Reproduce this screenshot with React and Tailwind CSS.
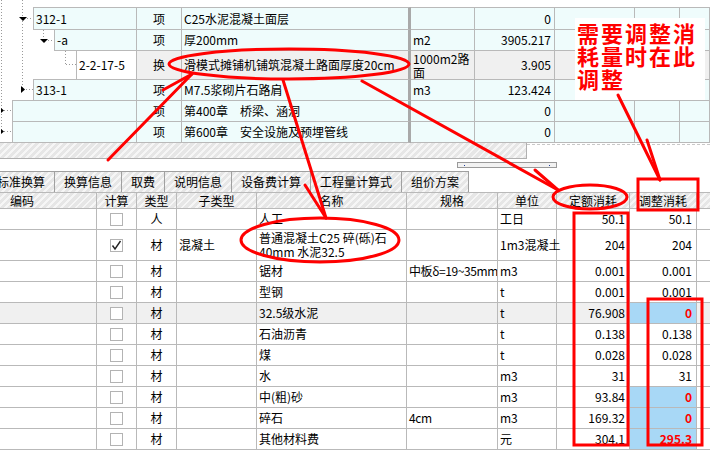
import React from 'react';

const GRID = 'border-[#b9b9b9]';
const HATCH = 'bg-[repeating-linear-gradient(135deg,#e6e6e6_0px,#e6e6e6_3px,#f6f6f6_3px,#f6f6f6_5px)]';
const CYAN = 'bg-[#effcfc]';

const topRows = [
  { h: 'h-[23px]', lineW: 'w-[33px]', segW: '', codeW: 'w-[104px]', code: '312-1', type: '项', name: 'C25水泥混凝土面层', unit: '', qty: '0' },
  { h: 'h-[21px]', lineW: 'w-[54px]', segW: '', codeW: 'w-[83px]', code: '-a', type: '项', name: '厚200mm', unit: 'm2', qty: '3905.217' },
  { h: 'h-[29px]', lineW: 'w-[33px]', segW: 'w-[43px]', codeW: 'w-[61px]', code: '2-2-17-5', type: '换', name: '滑模式摊铺机铺筑混凝土路面厚度20cm', unit: ['1000m2路', '面'], qty: '3.905', gray: true },
  { h: 'h-[21px]', lineW: 'w-[12px]', segW: 'w-[21px]', codeW: 'w-[104px]', code: '313-1', type: '项', name: 'M7.5浆砌片石路肩', unit: 'm3', qty: '123.424' },
  { h: 'h-[21px]', lineW: 'w-[12px]', segW: '', codeW: 'w-[125px]', code: '', type: '项', name: '第400章　桥梁、涵洞', unit: '', qty: '0' },
  { h: 'h-[21px]', lineW: '', segW: 'w-[12px]', codeW: 'w-[125px]', code: '', type: '项', name: '第600章　安全设施及预埋管线', unit: '', qty: '0' },
];

const tabs = ['标准换算', '换算信息', '取费', '说明信息', '设备费计算', '工程量计算式', '组价方案'];

const cols = [
  { label: '编码', w: 'w-[97px]', head: 'justify-start pl-[10px]' },
  { label: '计算', w: 'w-[40px]', head: 'justify-center' },
  { label: '类型', w: 'w-[40px]', head: 'justify-center' },
  { label: '子类型', w: 'w-[80px]', head: 'justify-center' },
  { label: '名称', w: 'w-[150px]', head: 'justify-center' },
  { label: '规格', w: 'w-[91px]', head: 'justify-center' },
  { label: '单位', w: 'w-[59px]', head: 'justify-center' },
  { label: '定额消耗', w: 'w-[73px]', head: 'justify-center' },
  { label: '调整消耗', w: 'w-[67px]', head: 'justify-center' },
];

const rows = [
  { calc: false, type: '人', sub: '', name: '人工', spec: '', unit: '工日', quota: '50.1', adj: '50.1' },
  { calc: true, type: '材', sub: '混凝土', name: ['普通混凝土C25 碎(砾)石', '40mm 水泥32.5'], spec: '', unit: '1m3混凝土', quota: '204', adj: '204', tall: true },
  { calc: false, type: '材', sub: '', name: '锯材', spec: '中板δ=19~35mm', unit: 'm3', quota: '0.001', adj: '0.001' },
  { calc: false, type: '材', sub: '', name: '型钢', spec: '', unit: 't', quota: '0.001', adj: '0.001' },
  { calc: false, type: '材', sub: '', name: '32.5级水泥', spec: '', unit: 't', quota: '76.908', adj: '0', changed: true, gray: true },
  { calc: false, type: '材', sub: '', name: '石油沥青', spec: '', unit: 't', quota: '0.138', adj: '0.138' },
  { calc: false, type: '材', sub: '', name: '煤', spec: '', unit: 't', quota: '0.028', adj: '0.028' },
  { calc: false, type: '材', sub: '', name: '水', spec: '', unit: 'm3', quota: '31', adj: '31' },
  { calc: false, type: '材', sub: '', name: '中(粗)砂', spec: '', unit: 'm3', quota: '93.84', adj: '0', changed: true },
  { calc: false, type: '材', sub: '', name: '碎石', spec: '4cm', unit: 'm3', quota: '169.32', adj: '0', changed: true },
  { calc: false, type: '材', sub: '', name: '其他材料费', spec: '', unit: '元', quota: '304.1', adj: '295.3', changed: true },
];

function TreeLines() {
  return (
    <svg className="absolute left-0 top-0" width="80" height="143">
      <g stroke="#9a9a9a" strokeWidth="1" strokeDasharray="1 2" fill="none">
        <line x1="1.5" y1="0" x2="1.5" y2="132" />
        <line x1="4" y1="110.5" x2="12" y2="110.5" />
        <line x1="4" y1="131.5" x2="12" y2="131.5" />
        <line x1="22.5" y1="0" x2="22.5" y2="90" />
        <line x1="27" y1="18.5" x2="33" y2="18.5" />
        <line x1="26" y1="89.5" x2="33" y2="89.5" />
        <line x1="43.5" y1="30" x2="43.5" y2="40" />
        <line x1="48" y1="40.5" x2="54" y2="40.5" />
        <line x1="65.5" y1="51" x2="65.5" y2="64" />
        <line x1="66" y1="64.5" x2="76" y2="64.5" />
      </g>
      <g fill="#000">
        <polygon points="19,17 27,17 23,21" />
        <polygon points="40,39 48,39 44,43" />
        <polygon points="21,86 25,89.5 21,93" />
        <polygon points="1,108 4,110.5 1,113" />
        <polygon points="1,129 4,131.5 1,134" />
      </g>
    </svg>
  );
}

function TopRow({ r, first }) {
  const bt = first ? 'border-t' : '';
  const bg = r.gray ? 'bg-[#f0f0f0]' : CYAN;
  const cell = `h-full border-r border-b ${bt} ${GRID} ${bg} flex items-center px-[2px]`;
  return (
    <div className={`flex ${r.h}`}>
      {r.lineW && <div className={`${r.lineW} h-full shrink-0`} />}
      {r.segW && <div className={`${r.segW} h-full shrink-0 border-b ${GRID}`} />}
      <div className={`${r.codeW} shrink-0 h-full border-l border-r border-b ${bt} ${GRID} ${r.gray ? 'bg-white' : CYAN} flex items-center px-[2px]`}>
        {r.code}
      </div>
      <div className={`${cell} w-[45px] shrink-0 justify-center`}>{r.type}</div>
      <div className={`h-full border-b ${bt} ${GRID} ${bg} w-[229px] shrink-0 flex items-center px-[2px] border-r-[3px] border-r-[#a9a9a9] whitespace-nowrap`}>
        {r.name}
      </div>
      <div className={`${cell} w-[64px] shrink-0`}>
        {Array.isArray(r.unit) ? (
          <div className="flex flex-col leading-[14px]">
            <span className="h-[14px] whitespace-nowrap">{r.unit[0]}</span>
            <span className="h-[13px]">{r.unit[1]}</span>
          </div>
        ) : (
          r.unit
        )}
      </div>
      <div className={`${cell} w-[80px] shrink-0 justify-end pr-[3px]`}>{r.qty}</div>
      <div className={`${cell} w-[80px] shrink-0`} />
      <div className={`${cell} w-[45px] shrink-0`} />
      <div className={`${cell} flex-1`} />
    </div>
  );
}

function Checkbox({ checked }) {
  return (
    <div className="w-[13px] h-[13px] border border-[#b3b3b3] bg-white flex items-center justify-center">
      {checked && (
        <svg width="11" height="11" viewBox="0 0 11 11">
          <polyline points="1.5,5.5 4,9 9.5,1" fill="none" stroke="#222" strokeWidth="1.4" />
        </svg>
      )}
    </div>
  );
}

function DataRow({ r }) {
  const h = r.tall ? 'h-[31px]' : 'h-[21px]';
  const bg = r.gray ? 'bg-[#f0f0f0]' : 'bg-white';
  const cell = `h-full shrink-0 border-r border-b ${GRID} flex items-center`;
  return (
    <div className={`flex ${h} ${bg}`}>
      <div className={`${cell} w-[97px]`} />
      <div className={`${cell} w-[40px] justify-center`}>
        <Checkbox checked={r.calc} />
      </div>
      <div className={`${cell} w-[40px] justify-center`}>{r.type}</div>
      <div className={`${cell} w-[80px] pl-[2px]`}>{r.sub}</div>
      <div className={`${cell} w-[150px] pl-[2px]`}>
        {Array.isArray(r.name) ? (
          <div className="flex flex-col leading-[14px]">
            <span className="h-[14px] whitespace-nowrap">{r.name[0]}</span>
            <span className="h-[14px] whitespace-nowrap">{r.name[1]}</span>
          </div>
        ) : (
          r.name
        )}
      </div>
      <div className={`${cell} w-[91px] pl-[2px] whitespace-nowrap overflow-hidden tracking-[-0.4px]`}>{r.spec}</div>
      <div className={`${cell} w-[59px] pl-[2px] whitespace-nowrap`}>{r.unit}</div>
      <div className={`${cell} w-[73px] justify-end pr-[4px]`}>{r.quota}</div>
      <div
        className={`${cell} w-[67px] justify-end pr-[4px] ${
          r.changed ? 'bg-[#a8d8f6] text-[#ff0000] font-bold' : ''
        }`}
      >
        {r.adj}
      </div>
      <div className={`h-full flex-1 border-b ${GRID}`} />
    </div>
  );
}

function Annotations() {
  return (
    <svg className="absolute left-0 top-0 pointer-events-none" width="710" height="452">
      <g stroke="#ff0000" strokeWidth="3" fill="none" strokeLinecap="round">
        <ellipse cx="289" cy="64" rx="120" ry="15" />
        <ellipse cx="590" cy="197" rx="37" ry="12" />
        <ellipse cx="320" cy="240" rx="79" ry="22" />
        <rect x="574" y="213" width="54" height="232" />
        <rect x="638" y="179" width="60" height="31" />
        <rect x="648" y="299" width="54" height="146" />
        <line x1="108" y1="160" x2="192" y2="74" />
        <line x1="163" y1="90" x2="192" y2="74" />
        <line x1="283" y1="80" x2="326" y2="218" />
        <line x1="305" y1="185" x2="326" y2="218" />
        <line x1="362" y1="81" x2="558" y2="190" />
        <line x1="535" y1="170" x2="558" y2="190" />
        <line x1="618" y1="95" x2="660" y2="180" />
        <line x1="647" y1="140" x2="660" y2="180" />
      </g>
    </svg>
  );
}

export default function App() {
  return (
    <div className="relative w-[710px] h-[452px] overflow-hidden bg-white text-[12px] leading-[14px] text-black font-['Noto_Sans_CJK_SC','Liberation_Sans',sans-serif]">
      {/* upper tree grid */}
      <div className="relative pt-[7px]">
        {topRows.map((r, i) => (
          <TopRow key={i} r={r} first={i === 0} />
        ))}
        <TreeLines />
      </div>

      {/* horizontal scroll strip */}
      <div className="flex h-[16px]">
        <div className={`w-[527px] h-full border-r border-b border-[#b0b0b0] ${HATCH}`} />
        <div className="flex-1 h-full">
          <div className="mt-[1px] border-t border-dashed border-[#c8c8c8]" />
        </div>
      </div>

      {/* splitter thumb */}
      <div className="h-[12px] pt-[3px] pl-[457px]">
        <div className="w-[100px] h-[6px] border border-[#9a9a9a] bg-[#f2f2f2] flex items-center justify-between px-[6px]">
          <div className="w-[1px] h-[1px] bg-[#2040a0]" />
          <div className="w-[1px] h-[1px] bg-[#2040a0]" />
        </div>
      </div>

      {/* tabs */}
      <div className="flex h-[21px] -ml-[13px]">
        {tabs.map((t, i) => (
          <div
            key={t}
            className={`h-full px-[9px] flex items-center border-t border-r border-[#a0a0a0] ${i === 0 ? 'border-l' : ''} ${HATCH} whitespace-nowrap`}
          >
            {t}
          </div>
        ))}
      </div>

      {/* lower grid header */}
      <div className={`flex h-[17px] border-t border-b ${GRID} ${HATCH}`}>
        {cols.map((c) => (
          <div key={c.label} className={`${c.w} shrink-0 h-full border-r ${GRID} flex items-center ${c.head}`}>
            {c.label}
          </div>
        ))}
        <div className="flex-1" />
      </div>

      {/* lower grid rows */}
      <div>
        {rows.map((r, i) => (
          <DataRow key={i} r={r} />
        ))}
      </div>

      {/* callout text */}
      <div className="absolute left-[575px] top-[18px] w-[130px] h-[82px] bg-white pl-[2px] pt-[3px] text-[22px] leading-[23px] tracking-[2px] font-bold text-[#ff0000]">
        <div className="h-[23px] whitespace-nowrap">需要调整消</div>
        <div className="h-[23px] whitespace-nowrap">耗量时在此</div>
        <div className="h-[23px] whitespace-nowrap">调整</div>
      </div>

      <Annotations />
    </div>
  );
}
